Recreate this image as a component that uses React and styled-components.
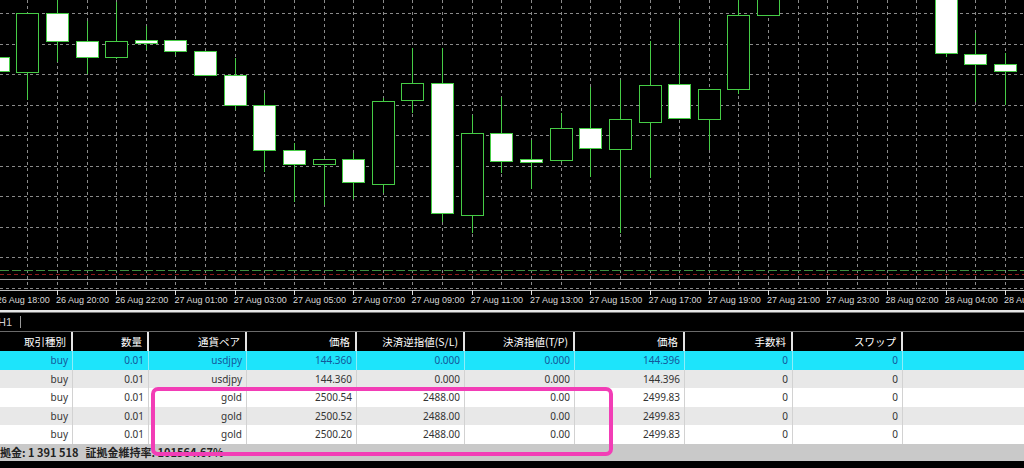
import React from 'react';
import styled, { createGlobalStyle } from 'styled-components';

const GlobalStyle = createGlobalStyle`
    html, body {
        margin: 0;
        padding: 0;
        background: #000;
        overflow: hidden;
    }
`;

const Screen = styled.div`
    position: relative;
    width: 1024px;
    height: 468px;
    background: #000;
    display: flex;
    flex-direction: column;
    overflow: hidden;
    font-family: "Noto Sans", "Noto Sans CJK JP", sans-serif;
`;

const ChartSvg = styled.svg`
    display: block;
    flex-shrink: 0;
`;

const TimeAxis = styled.div`
    height: 15px;
    display: flex;
    margin-left: -3.3px;
    flex-shrink: 0;
`;

const TimeLabel = styled.div`
    width: 59.26px;
    flex-shrink: 0;
    font-family: "Liberation Sans", sans-serif;
    font-size: 9px;
    line-height: 11px;
    color: #dadada;
    white-space: nowrap;
`;

const Divider = styled.div`
    height: 3px;
    background: #e6e6e6;
    border-bottom: 1px solid #777;
    box-sizing: border-box;
    flex-shrink: 0;
`;

const TabBar = styled.div`
    height: 18px;
    display: flex;
    align-items: center;
    border-bottom: 1px solid #6a6a6a;
    flex-shrink: 0;
`;

const TabName = styled.span`
    font-family: "Liberation Sans", sans-serif;
    font-size: 11px;
    color: #cfcfcf;
    margin-left: -2px;
    width: 22px;
`;

const TabSep = styled.span`
    width: 1px;
    height: 12px;
    background: #9a9a9a;
`;

const Grid = styled.div`
    display: grid;
    grid-template-columns: 73px 76px 98px 110px 108px 110px 110px 108px 110px 1fr;
    flex-shrink: 0;
`;

const HeadCell = styled.div`
    height: 19px;
    background: #000;
    color: #fff;
    font-family: "Noto Sans CJK JP", sans-serif;
    font-size: 10.5px;
    line-height: 19px;
    text-align: right;
    padding-right: 5px;
    border-right: 2px solid ${(p) => (p.$last ? 'transparent' : '#e4e4e4')};
    box-sizing: border-box;
    white-space: nowrap;
    overflow: hidden;
`;

const Cell = styled.div`
    height: 18.6px;
    background: ${(p) => p.$bg};
    color: ${(p) => p.$fg};
    font-size: 10px;
    line-height: 18.6px;
    text-align: right;
    padding-right: 4px;
    border-right: 1px solid ${(p) => p.$line};
    box-sizing: border-box;
    white-space: nowrap;
`;

const StatusBar = styled.div`
    height: 17px;
    background: #c9c9c9;
    display: flex;
    align-items: center;
    gap: 7px;
    font-family: "Noto Sans CJK JP", sans-serif;
    font-size: 11px;
    font-weight: bold;
    color: #222;
    margin-left: -11px;
    flex-shrink: 0;
    white-space: nowrap;
`;

const Footer = styled.div`
    flex: 1;
    background: #000;
`;

const Highlight = styled.div`
    position: absolute;
    left: 151px;
    top: 387px;
    width: 462px;
    height: 69px;
    border: 4px solid #f23db6;
    border-radius: 7px;
    box-sizing: border-box;
    pointer-events: none;
`;

const STEP = 29.63;
const X0 = 27.3;
const cx = (i) => X0 + STEP * i;

// [index, fill, bodyTop, bodyBottom, wickTop, wickBottom]
const candles = [
    [-1, 'w', 57, 71, 57, 71],
    [0, 'b', 13, 72, 13, 100],
    [1, 'w', 13, 41, -5, 62],
    [2, 'w', 41, 57, 21, 74],
    [3, 'b', 41, 57, 2, 59],
    [4, 'w', 40, 43, 26, 50],
    [5, 'w', 40, 51, 40, 55],
    [6, 'w', 51, 75, 51, 75],
    [7, 'w', 75, 105, 58, 110],
    [8, 'w', 105, 150, 93, 172],
    [9, 'w', 150, 164, 143, 202],
    [10, 'b', 159, 164, 159, 205],
    [11, 'w', 159, 182, 153, 199],
    [12, 'b', 101, 184, 98, 193],
    [13, 'b', 83, 100, 48, 113],
    [14, 'w', 83, 213, 48, 222],
    [15, 'b', 133, 215, 115, 233],
    [16, 'w', 133, 161, 97, 173],
    [17, 'w', 159, 162, 140, 189],
    [18, 'b', 128, 160, 113, 162],
    [19, 'w', 128, 148, 87, 177],
    [20, 'b', 119, 149, 80, 233],
    [21, 'b', 85, 122, 41, 178],
    [22, 'w', 84, 118, 20, 118],
    [23, 'b', 89, 119, 89, 150],
    [24, 'b', 15, 89, -5, 94],
    [25, 'b', -20, 15, -20, 15],
    [31, 'w', -20, 53, -20, 57],
    [32, 'w', 54, 64, 33, 102],
    [33, 'w', 64, 71, 53, 105],
    [34, 'b', 70, 127, 70, 127],
];

const labels = [
    '26 Aug 18:00', '26 Aug 20:00', '26 Aug 22:00', '27 Aug 01:00', '27 Aug 03:00',
    '27 Aug 05:00', '27 Aug 07:00', '27 Aug 09:00', '27 Aug 11:00', '27 Aug 13:00',
    '27 Aug 15:00', '27 Aug 17:00', '27 Aug 19:00', '27 Aug 21:00', '27 Aug 23:00',
    '28 Aug 02:00', '28 Aug 04:00', '28 Aug 06:00',
];

const headers = ['取引種別', '数量', '通貨ペア', '価格', '決済逆指値(S/L)', '決済指値(T/P)', '価格', '手数料', 'スワップ', ''];

const rows = [
    { kind: 'cyan', cells: ['buy', '0.01', 'usdjpy', '144.360', '0.000', '0.000', '144.396', '0', '0', ''] },
    { kind: 'gray', cells: ['buy', '0.01', 'usdjpy', '144.360', '0.000', '0.000', '144.396', '0', '0', ''] },
    { kind: 'white', cells: ['buy', '0.01', 'gold', '2500.54', '2488.00', '0.00', '2499.83', '0', '0', ''] },
    { kind: 'gray', cells: ['buy', '0.01', 'gold', '2500.52', '2488.00', '0.00', '2499.83', '0', '0', ''] },
    { kind: 'white', cells: ['buy', '0.01', 'gold', '2500.20', '2488.00', '0.00', '2499.83', '0', '0', ''] },
];

const rowColors = {
    cyan: { bg: '#1de4fb', fg: '#13579a', line: '#8cecf8' },
    gray: { bg: '#e8e8e8', fg: '#333', line: '#d2d2d2' },
    white: { bg: '#ffffff', fg: '#333', line: '#d2d2d2' },
};

function Chart() {
    const green = '#46cc46';
    const hLines = [];
    for (let k = 0; k < 10; k++) hLines.push(Math.round(13.3 + 30.5 * k) + 0.5);
    const vLines = [];
    for (let i = -1; i <= 34; i++) vLines.push(Math.round(cx(i)) + 0.5);

    return (
        <ChartSvg width="1024" height="295" viewBox="0 0 1024 295" shapeRendering="crispEdges">
            <rect x="0" y="0" width="1024" height="295" fill="#000" />
            {hLines.map((y) => (
                <line key={'h' + y} x1="0" x2="1024" y1={y} y2={y} stroke="#8a8a8a" strokeDasharray="3 3" />
            ))}
            {vLines.map((x) => (
                <line key={'v' + x} x1={x} x2={x} y1="0" y2="289" stroke="#8a8a8a" strokeDasharray="3 3" />
            ))}
            <line x1="0" x2="1024" y1="270.5" y2="270.5" stroke="#3f8f3f" strokeDasharray="9 3" />
            <line x1="0" x2="1024" y1="274.5" y2="274.5" stroke="#8e1c1c" strokeDasharray="4 3" />
            <line x1="0" x2="1024" y1="279.5" y2="279.5" stroke="#9a9a9a" />
            <line x1="0" x2="1024" y1="290.5" y2="290.5" stroke="#bdbdbd" />
            {vLines.filter((_, n) => n % 2 === 0).map((x) => (
                <line key={'t' + x} x1={x} x2={x} y1="290" y2="295" stroke="#e0e0e0" />
            ))}
            {candles.map(([i, fill, bt, bb, wt, wb]) => {
                const x = Math.round(cx(i));
                return (
                    <g key={i}>
                        <line x1={x + 0.5} x2={x + 0.5} y1={wt} y2={wb} stroke={green} />
                        <rect
                            x={x - 10.5}
                            y={bt + 0.5}
                            width="22"
                            height={Math.max(bb - bt, 1)}
                            fill={fill === 'w' ? '#fff' : '#000'}
                            stroke={green}
                        />
                    </g>
                );
            })}
        </ChartSvg>
    );
}

function App() {
    return (
        <Screen>
            <GlobalStyle />
            <Chart />
            <TimeAxis>
                {labels.map((l) => (
                    <TimeLabel key={l}>{l}</TimeLabel>
                ))}
            </TimeAxis>
            <Divider />
            <TabBar>
                <TabName>H1</TabName>
                <TabSep />
            </TabBar>
            <Grid>
                {headers.map((h, n) => (
                    <HeadCell key={'h' + n} $last={n === headers.length - 1}>{h}</HeadCell>
                ))}
                {rows.map((r, ri) =>
                    r.cells.map((c, ci) => {
                        const col = rowColors[r.kind];
                        return (
                            <Cell key={ri + '-' + ci} $bg={col.bg} $fg={col.fg} $line={ci === 9 ? 'transparent' : col.line}>
                                {c}
                            </Cell>
                        );
                    })
                )}
            </Grid>
            <StatusBar>
                <span>証拠金: 1 391 518</span>
                <span>証拠金維持率: 101564.67%</span>
            </StatusBar>
            <Footer />
            <Highlight />
        </Screen>
    );
}

export default App;
